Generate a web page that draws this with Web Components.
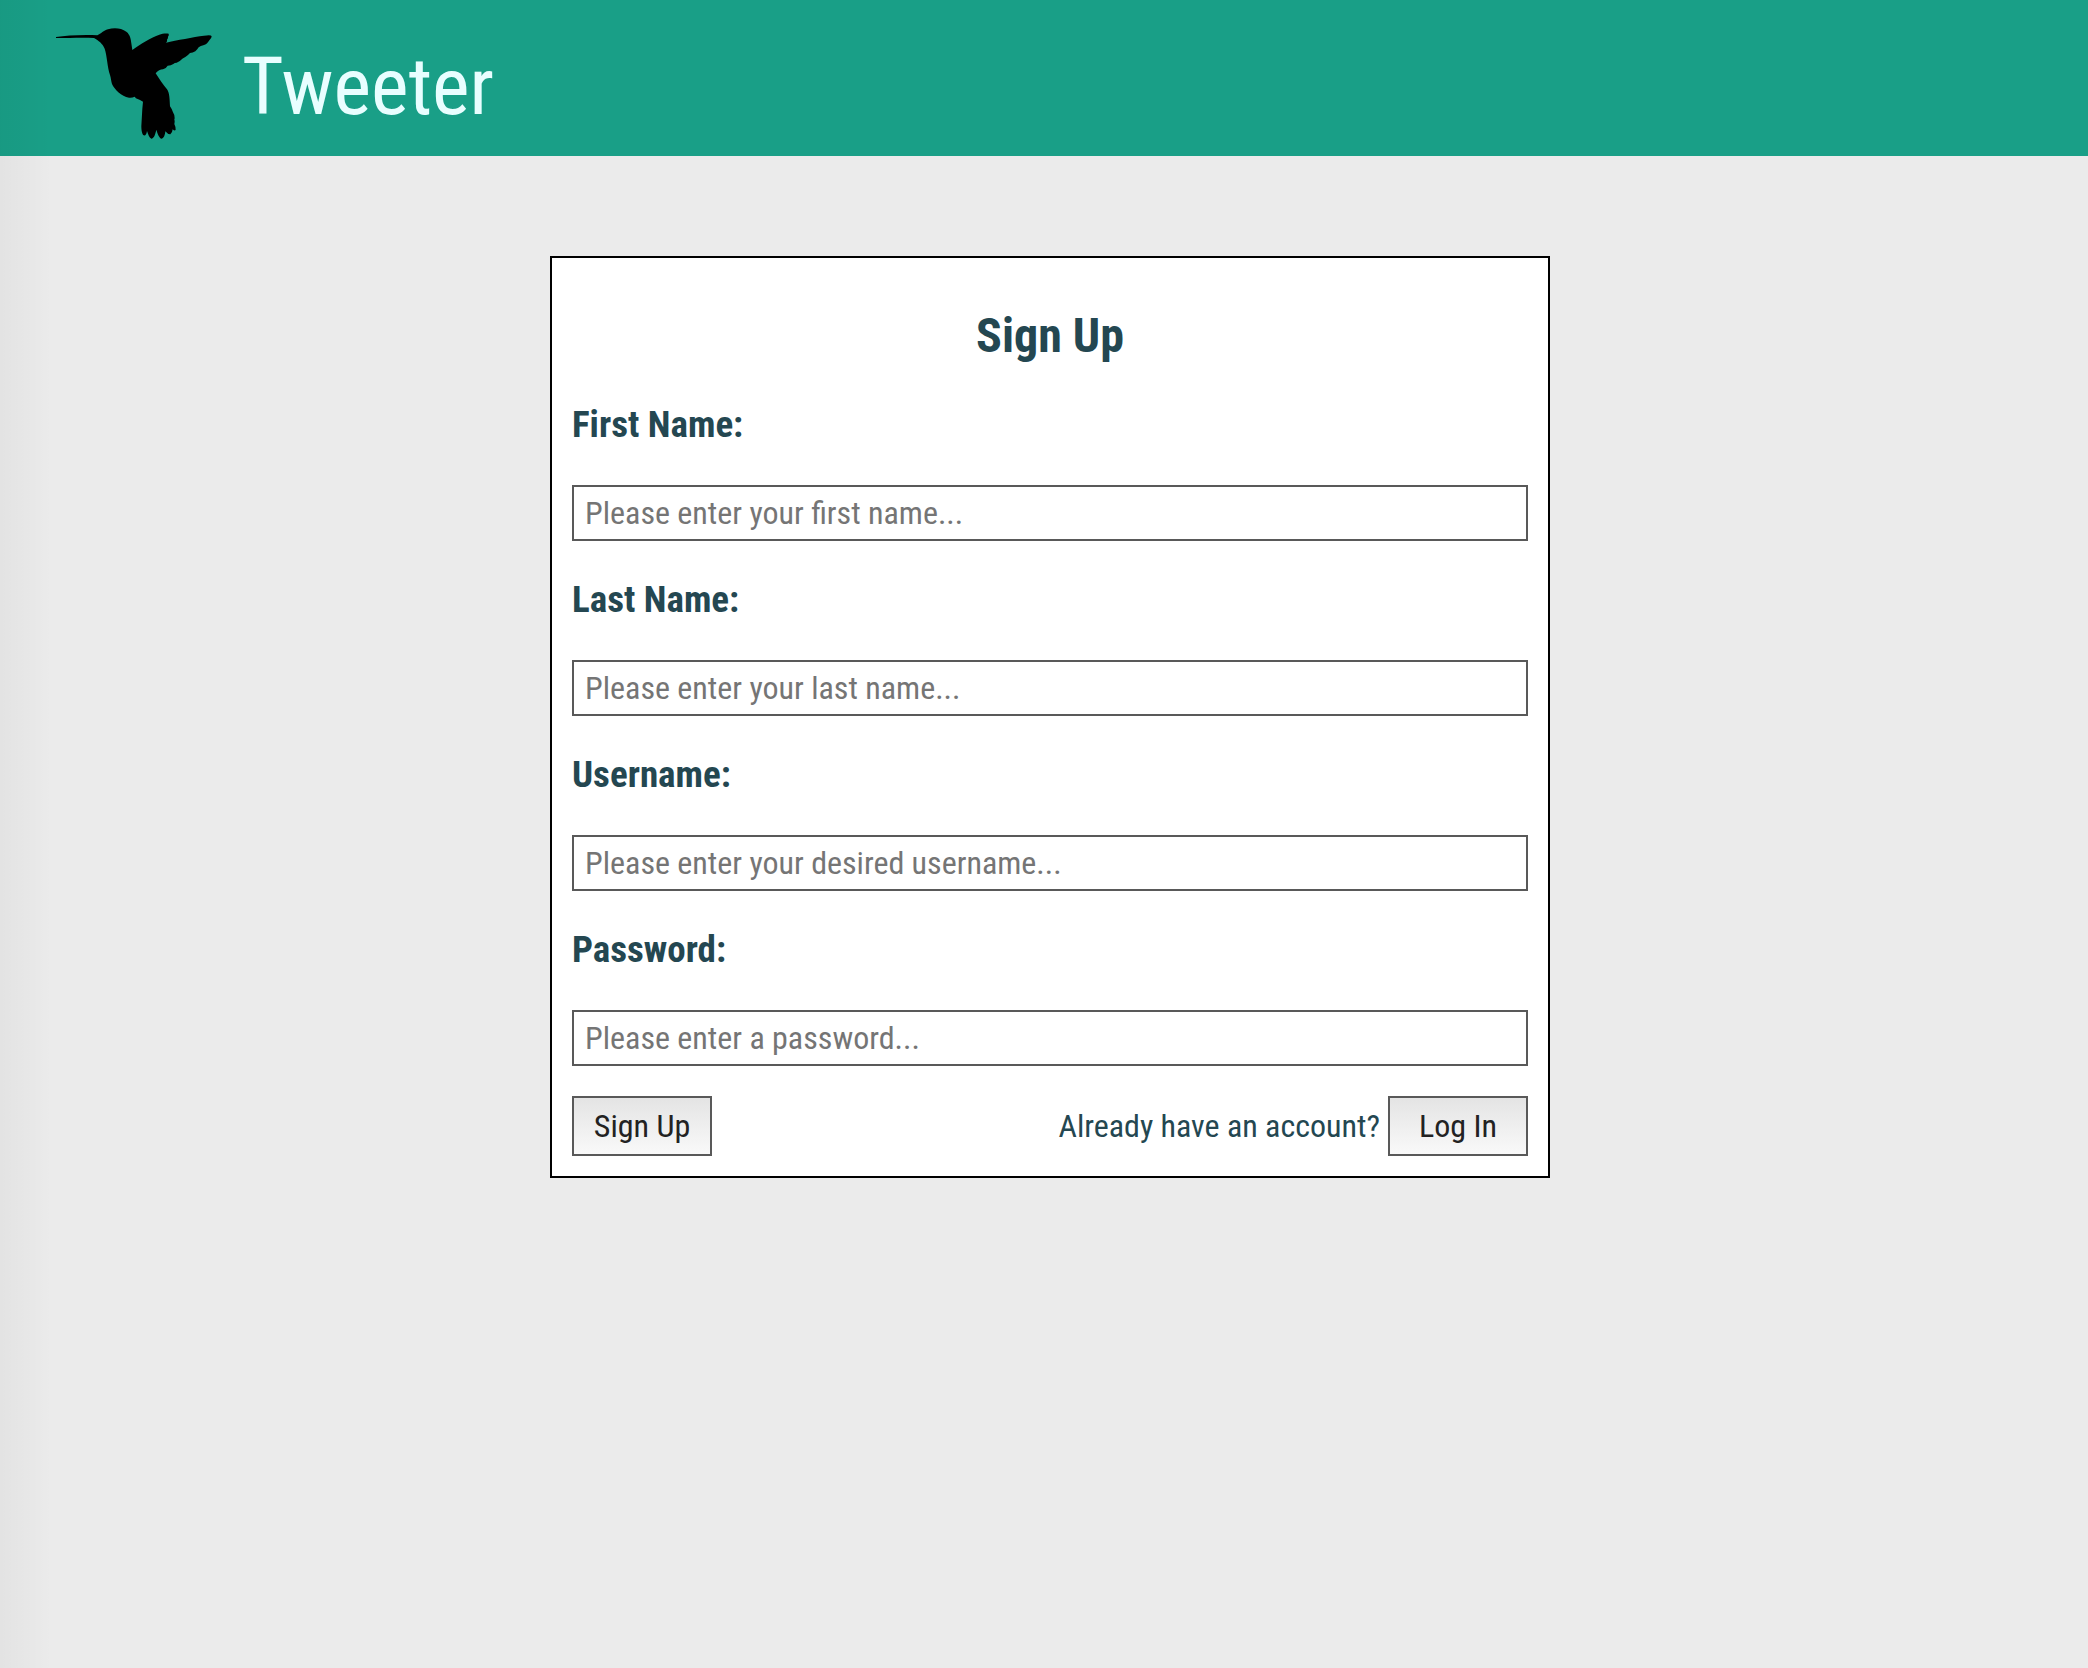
<!DOCTYPE html>
<html lang="en">
<head>
<meta charset="utf-8">
<title>Tweeter</title>
<style>
  html { height: 100%; }
  body {
    margin: 0;
    min-height: 100%;
    background: #ebebeb;
    color: #244751;
    font-family: "Roboto Condensed", Roboto, "Liberation Sans Narrow", sans-serif;
    font-size: 32px;
    line-height: 38px;
  }
</style>
</head>
<body>
<tweeter-app></tweeter-app>

<template id="app-template">
  <style>
    :host { display: block; position: relative; min-height: 100vh; }
    .edge {
      position: absolute; inset: 0 auto 0 0; width: 52px; pointer-events: none;
      background: linear-gradient(to right, rgba(0,0,0,.035), rgba(0,0,0,0));
    }
    main { display: flex; justify-content: center; padding: 100px 0 100px 12px; }
  </style>
  <tweeter-header>Tweeter</tweeter-header>
  <main>
    <sign-up-card>
      <span slot="title">Sign Up</span>
      <form-field name="first-name" placeholder="Please enter your first name...">First Name:</form-field>
      <form-field name="last-name" placeholder="Please enter your last name...">Last Name:</form-field>
      <form-field name="username" placeholder="Please enter your desired username...">Username:</form-field>
      <form-field name="password" type="password" placeholder="Please enter a password...">Password:</form-field>
      <push-button slot="submit">Sign Up</push-button>
      <span slot="prompt">Already have an account?</span>
      <push-button slot="login">Log In</push-button>
    </sign-up-card>
  </main>
  <div class="edge"></div>
</template>

<template id="header-template">
  <style>
    :host { display: block; background: #199f87; }
    header { display: flex; align-items: center; gap: 30px; height: 156px; padding-left: 56px; }
    svg { display: block; width: 156px; height: 156px; }
    h1 { margin: 0; padding-top: 18px; font-size: 80px; line-height: 94px; font-weight: 400; color: #e8feff; }
  </style>
  <header>
    <svg viewBox="48 -30 468 468" aria-hidden="true">
      <path d="M48 81 C80 77 120 74 172 76 C184 71 190 62 204 58 C222 52 244 54 259 65 C270 73 273 88 274 100 L277 120 C302 102 333 82 358 74 C366 71 378 69 386 71 Q388 75 384 80 Q385 84 381 89 Q383 93 378 98 C410 91 460 81 492 77 Q514 73 515 79 Q515 85 508 91 C503 99 499 104 490 106 Q482 108 476 112 Q472 119 466 124 Q458 129 450 129 Q444 136 436 141 Q430 144 427 146 Q420 154 410 158 Q404 158 400 162 Q393 167 383 167 Q377 177 369 178 Q357 178 347 190 C357 206 369 224 381 238 C389 248 389 270 390 289 Q397 299 399 307 Q405 316 404 325 Q402 328 404 333 Q404 339 403 342 Q408 352 407 360 Q402 363 398 358 Q397 369 391 373 Q383 373 376 364 C375 376 371 386 364 386 C356 382 353 371 349 359 C346 373 342 385 334 386 C327 383 325 374 321 363 Q319 378 311 376 C305 372 304 357 304 348 L307 296 L309 275 L300 270 L293 267 Q287 265 284 260 Q277 264 267 263 C244 259 224 239 216 222 C213 213 213 204 210 195 C202 172 201 136 194 116 C187 100 176 92 162 84 C130 82 90 84 48 84Z"/>
    </svg>
    <h1><slot></slot></h1>
  </header>
</template>

<template id="card-template">
  <style>
    :host { display: block; box-sizing: border-box; width: 1000px; max-width: 100%; background: #fff; border: 2px solid #000; padding: 20px; }
    h2 { margin: 30px 0 39px; text-align: center; font-size: 48px; line-height: 56px; font-weight: 700; }
    .fields { display: flex; flex-direction: column; gap: 37px; }
    .actions { display: flex; justify-content: space-between; align-items: center; margin-top: 30px; }
    .login { display: flex; align-items: center; gap: 8px; }
  </style>
  <form>
    <h2><slot name="title"></slot></h2>
    <div class="fields"><slot></slot></div>
    <div class="actions">
      <slot name="submit"></slot>
      <div class="login"><slot name="prompt"></slot><slot name="login"></slot></div>
    </div>
  </form>
</template>

<template id="field-template">
  <style>
    :host { display: block; }
    label { display: block; margin-bottom: 38px; font-size: 37px; line-height: 44px; font-weight: 700; }
    input {
      display: block; box-sizing: border-box; width: 100%; height: 56px; margin: 0; padding: 0 11px;
      border: 2px solid #595959; border-radius: 0; background: #fff; color: #222;
      font: inherit; outline: none;
    }
    input::placeholder { color: #757575; opacity: 1; }
  </style>
  <label for="control"><slot></slot></label>
  <input id="control">
</template>

<template id="button-template">
  <style>
    :host { display: block; }
    button {
      display: block; box-sizing: border-box; width: 140px; height: 60px; margin: 0; padding: 0;
      border: 2px solid #595959; border-radius: 0; background: linear-gradient(#e4e4e4, #f9f9f9);
      color: #222; font: inherit; cursor: pointer;
    }
  </style>
  <button type="button"><slot></slot></button>
</template>

<script>
  class TemplateElement extends HTMLElement {
    constructor() {
      super();
      const template = document.getElementById(this.constructor.templateId);
      this.attachShadow({ mode: "open" }).append(template.content.cloneNode(true));
    }
  }
  class PushButton extends TemplateElement { static templateId = "button-template"; }
  class FormField extends TemplateElement {
    static templateId = "field-template";
    connectedCallback() {
      const input = this.shadowRoot.querySelector("input");
      input.type = this.getAttribute("type") || "text";
      input.name = this.getAttribute("name");
      input.placeholder = this.getAttribute("placeholder");
    }
  }
  class SignUpCard extends TemplateElement { static templateId = "card-template"; }
  class TweeterHeader extends TemplateElement { static templateId = "header-template"; }
  class TweeterApp extends TemplateElement { static templateId = "app-template"; }
  customElements.define("push-button", PushButton);
  customElements.define("form-field", FormField);
  customElements.define("sign-up-card", SignUpCard);
  customElements.define("tweeter-header", TweeterHeader);
  customElements.define("tweeter-app", TweeterApp);
</script>
</body>
</html>
